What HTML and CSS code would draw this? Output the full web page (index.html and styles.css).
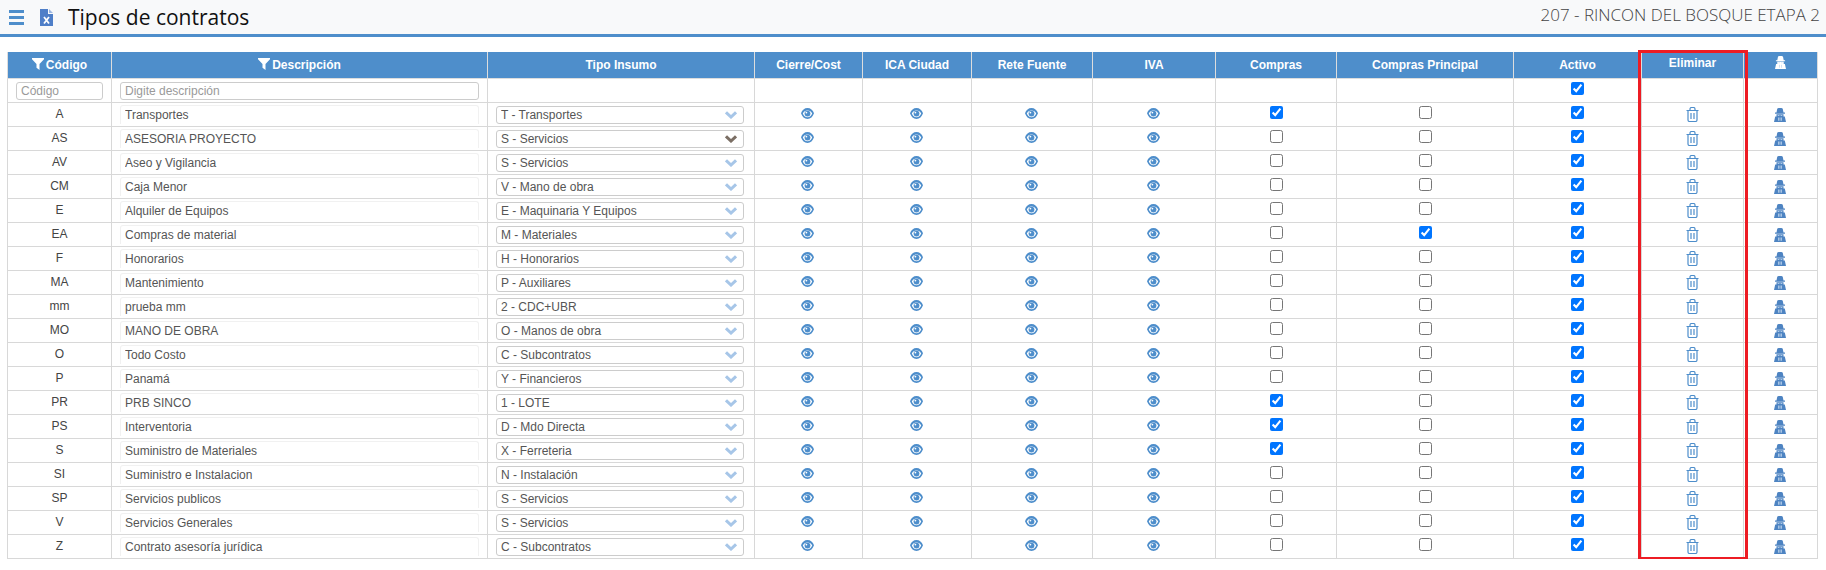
FILE: index.html
```html
<!DOCTYPE html>
<html lang="es">
<head>
<meta charset="utf-8">
<title>Tipos de contratos</title>
<link rel="stylesheet" href="styles.css">
</head>
<body>
<svg class="defs" width="0" height="0" aria-hidden="true">
  <symbol id="i-eye" viewBox="0 0 13 11"><path fill-rule="evenodd" d="M6.500 0C3.500 0 1.100 2 0 5.300 1.100 8.800 3.500 11 6.500 11S11.900 8.800 13 5.300C11.900 2 9.500 0 6.500 0ZM6.500 2.500C8.700 2.500 10.300 3.700 11.200 5.400 10.300 7.500 8.700 9.300 6.500 9.300S2.700 7.500 1.800 5.400C2.700 3.700 4.300 2.500 6.500 2.500Z"/><circle cx="6.500" cy="5.600" r="2.900"/><circle cx="5.400" cy="4.600" r="0.900" fill="#fff"/></symbol>
  <symbol id="i-trash" viewBox="0 0 13 15"><path fill="none" stroke="currentColor" stroke-width="1.200" d="M.5 3.500H12.500M2 3.500V13A1.500 1.500 0 0 0 3.500 14.500H9.500A1.500 1.500 0 0 0 11 13V3.500M4 3.500V2A1.500 1.500 0 0 1 5.500.5H7.500A1.500 1.500 0 0 1 9 2V3.500M5 6V12M8 6V12"/></symbol>
  <symbol id="i-spy" viewBox="0 0 12 14"><path d="M2.500 4.500 3.200 1C3.400.3 4 0 6 0S8.600.3 8.800 1L9.500 4.500H11V5.700H1V4.500ZM2.500 6.300H9.500V8.500H10.800L12 14H0L1.200 8.500H2.500Z"/><path fill="#cfe0f2" d="M4.300 9.500H5.400V12.800H4.300ZM6.600 9.500H7.700V12.800H6.600ZM3.700 7H5.400V7.800H3.700ZM6.600 7H8.300V7.800H6.600Z"/></symbol>
  <symbol id="i-filter" viewBox="0 0 12 12"><path d="M0 0H12V1.200L7.500 6V12L4.500 9.800V6L0 1.200Z"/></symbol>
  <symbol id="i-chev" viewBox="0 0 12 8"><path fill="none" stroke="currentColor" stroke-width="3" d="M1 1.300 6 6 11 1.300"/></symbol>
</svg>

<header class="topbar">
  <div class="topbar-left">
    <svg class="burger" width="15" height="15" viewBox="0 0 15 15" aria-hidden="true"><path d="M0 0H15V3H0ZM0 6H15V9H0ZM0 12H15V15H0Z"/></svg>
    <svg class="xls" width="13" height="17" viewBox="0 0 13 17" aria-hidden="true"><path fill="#4f7fc8" d="M0 0H8V5H13V17H0Z"/><path fill="#9db8e2" d="M9 0 13 4H9Z"/><path fill="none" stroke="#fff" stroke-width="1.800" d="M4 8 9 14.500M9 8 4 14.500"/></svg>
    <h1 class="title">Tipos de contratos</h1>
  </div>
  <div class="project">207 - RINCON DEL BOSQUE ETAPA 2</div>
</header>

<main class="content">
  <table class="grid">
    <colgroup>
      <col class="c-code"><col class="c-desc"><col class="c-type"><col class="c-close"><col class="c-ica"><col class="c-rete"><col class="c-iva"><col class="c-buy"><col class="c-main"><col class="c-act"><col class="c-del"><col class="c-spy">
    </colgroup>
    <thead>
      <tr>
        <th><svg class="ic-filter"><use href="#i-filter"/></svg>Código</th>
        <th><svg class="ic-filter"><use href="#i-filter"/></svg>Descripción</th>
        <th>Tipo Insumo</th><th>Cierre/Cost</th><th>ICA Ciudad</th><th>Rete Fuente</th><th>IVA</th><th>Compras</th><th>Compras Principal</th><th>Activo</th>
        <th class="th-up">Eliminar</th>
        <th class="th-up"><svg class="ic-spy-h"><use href="#i-spy"/></svg></th>
      </tr>
      <tr class="filters">
        <td><input class="field" placeholder="Código"></td>
        <td><input class="field" placeholder="Digite descripción"></td>
        <td></td><td></td><td></td><td></td><td></td><td></td><td></td>
        <td><input type="checkbox" checked></td>
        <td></td><td></td>
      </tr>
    </thead>
    <tbody>
      <tr><td class="code">A</td><td><input class="desc" value="Transportes"></td><td><div class="pick"><select><option>T - Transportes</option></select><svg class="chev"><use href="#i-chev"/></svg></div></td><td><svg class="eye"><use href="#i-eye"/></svg></td><td><svg class="eye"><use href="#i-eye"/></svg></td><td><svg class="eye"><use href="#i-eye"/></svg></td><td><svg class="eye"><use href="#i-eye"/></svg></td><td><input type="checkbox" checked></td><td><input type="checkbox"></td><td><input type="checkbox" checked></td><td><svg class="trash"><use href="#i-trash"/></svg></td><td><svg class="spy"><use href="#i-spy"/></svg></td></tr>
      <tr><td class="code">AS</td><td><input class="desc" value="ASESORIA PROYECTO"></td><td><div class="pick"><select><option>S - Servicios</option></select><svg class="chev chev-dark"><use href="#i-chev"/></svg></div></td><td><svg class="eye"><use href="#i-eye"/></svg></td><td><svg class="eye"><use href="#i-eye"/></svg></td><td><svg class="eye"><use href="#i-eye"/></svg></td><td><svg class="eye"><use href="#i-eye"/></svg></td><td><input type="checkbox"></td><td><input type="checkbox"></td><td><input type="checkbox" checked></td><td><svg class="trash"><use href="#i-trash"/></svg></td><td><svg class="spy"><use href="#i-spy"/></svg></td></tr>
      <tr><td class="code">AV</td><td><input class="desc" value="Aseo y Vigilancia"></td><td><div class="pick"><select><option>S - Servicios</option></select><svg class="chev"><use href="#i-chev"/></svg></div></td><td><svg class="eye"><use href="#i-eye"/></svg></td><td><svg class="eye"><use href="#i-eye"/></svg></td><td><svg class="eye"><use href="#i-eye"/></svg></td><td><svg class="eye"><use href="#i-eye"/></svg></td><td><input type="checkbox"></td><td><input type="checkbox"></td><td><input type="checkbox" checked></td><td><svg class="trash"><use href="#i-trash"/></svg></td><td><svg class="spy"><use href="#i-spy"/></svg></td></tr>
      <tr><td class="code">CM</td><td><input class="desc" value="Caja Menor"></td><td><div class="pick"><select><option>V - Mano de obra</option></select><svg class="chev"><use href="#i-chev"/></svg></div></td><td><svg class="eye"><use href="#i-eye"/></svg></td><td><svg class="eye"><use href="#i-eye"/></svg></td><td><svg class="eye"><use href="#i-eye"/></svg></td><td><svg class="eye"><use href="#i-eye"/></svg></td><td><input type="checkbox"></td><td><input type="checkbox"></td><td><input type="checkbox" checked></td><td><svg class="trash"><use href="#i-trash"/></svg></td><td><svg class="spy"><use href="#i-spy"/></svg></td></tr>
      <tr><td class="code">E</td><td><input class="desc" value="Alquiler de Equipos"></td><td><div class="pick"><select><option>E - Maquinaria Y Equipos</option></select><svg class="chev"><use href="#i-chev"/></svg></div></td><td><svg class="eye"><use href="#i-eye"/></svg></td><td><svg class="eye"><use href="#i-eye"/></svg></td><td><svg class="eye"><use href="#i-eye"/></svg></td><td><svg class="eye"><use href="#i-eye"/></svg></td><td><input type="checkbox"></td><td><input type="checkbox"></td><td><input type="checkbox" checked></td><td><svg class="trash"><use href="#i-trash"/></svg></td><td><svg class="spy"><use href="#i-spy"/></svg></td></tr>
      <tr><td class="code">EA</td><td><input class="desc" value="Compras de material"></td><td><div class="pick"><select><option>M - Materiales</option></select><svg class="chev"><use href="#i-chev"/></svg></div></td><td><svg class="eye"><use href="#i-eye"/></svg></td><td><svg class="eye"><use href="#i-eye"/></svg></td><td><svg class="eye"><use href="#i-eye"/></svg></td><td><svg class="eye"><use href="#i-eye"/></svg></td><td><input type="checkbox"></td><td><input type="checkbox" checked></td><td><input type="checkbox" checked></td><td><svg class="trash"><use href="#i-trash"/></svg></td><td><svg class="spy"><use href="#i-spy"/></svg></td></tr>
      <tr><td class="code">F</td><td><input class="desc" value="Honorarios"></td><td><div class="pick"><select><option>H - Honorarios</option></select><svg class="chev"><use href="#i-chev"/></svg></div></td><td><svg class="eye"><use href="#i-eye"/></svg></td><td><svg class="eye"><use href="#i-eye"/></svg></td><td><svg class="eye"><use href="#i-eye"/></svg></td><td><svg class="eye"><use href="#i-eye"/></svg></td><td><input type="checkbox"></td><td><input type="checkbox"></td><td><input type="checkbox" checked></td><td><svg class="trash"><use href="#i-trash"/></svg></td><td><svg class="spy"><use href="#i-spy"/></svg></td></tr>
      <tr><td class="code">MA</td><td><input class="desc" value="Mantenimiento"></td><td><div class="pick"><select><option>P - Auxiliares</option></select><svg class="chev"><use href="#i-chev"/></svg></div></td><td><svg class="eye"><use href="#i-eye"/></svg></td><td><svg class="eye"><use href="#i-eye"/></svg></td><td><svg class="eye"><use href="#i-eye"/></svg></td><td><svg class="eye"><use href="#i-eye"/></svg></td><td><input type="checkbox"></td><td><input type="checkbox"></td><td><input type="checkbox" checked></td><td><svg class="trash"><use href="#i-trash"/></svg></td><td><svg class="spy"><use href="#i-spy"/></svg></td></tr>
      <tr><td class="code">mm</td><td><input class="desc" value="prueba mm"></td><td><div class="pick"><select><option>2 - CDC+UBR</option></select><svg class="chev"><use href="#i-chev"/></svg></div></td><td><svg class="eye"><use href="#i-eye"/></svg></td><td><svg class="eye"><use href="#i-eye"/></svg></td><td><svg class="eye"><use href="#i-eye"/></svg></td><td><svg class="eye"><use href="#i-eye"/></svg></td><td><input type="checkbox"></td><td><input type="checkbox"></td><td><input type="checkbox" checked></td><td><svg class="trash"><use href="#i-trash"/></svg></td><td><svg class="spy"><use href="#i-spy"/></svg></td></tr>
      <tr><td class="code">MO</td><td><input class="desc" value="MANO DE OBRA"></td><td><div class="pick"><select><option>O - Manos de obra</option></select><svg class="chev"><use href="#i-chev"/></svg></div></td><td><svg class="eye"><use href="#i-eye"/></svg></td><td><svg class="eye"><use href="#i-eye"/></svg></td><td><svg class="eye"><use href="#i-eye"/></svg></td><td><svg class="eye"><use href="#i-eye"/></svg></td><td><input type="checkbox"></td><td><input type="checkbox"></td><td><input type="checkbox" checked></td><td><svg class="trash"><use href="#i-trash"/></svg></td><td><svg class="spy"><use href="#i-spy"/></svg></td></tr>
      <tr><td class="code">O</td><td><input class="desc" value="Todo Costo"></td><td><div class="pick"><select><option>C - Subcontratos</option></select><svg class="chev"><use href="#i-chev"/></svg></div></td><td><svg class="eye"><use href="#i-eye"/></svg></td><td><svg class="eye"><use href="#i-eye"/></svg></td><td><svg class="eye"><use href="#i-eye"/></svg></td><td><svg class="eye"><use href="#i-eye"/></svg></td><td><input type="checkbox"></td><td><input type="checkbox"></td><td><input type="checkbox" checked></td><td><svg class="trash"><use href="#i-trash"/></svg></td><td><svg class="spy"><use href="#i-spy"/></svg></td></tr>
      <tr><td class="code">P</td><td><input class="desc" value="Panamá"></td><td><div class="pick"><select><option>Y - Financieros</option></select><svg class="chev"><use href="#i-chev"/></svg></div></td><td><svg class="eye"><use href="#i-eye"/></svg></td><td><svg class="eye"><use href="#i-eye"/></svg></td><td><svg class="eye"><use href="#i-eye"/></svg></td><td><svg class="eye"><use href="#i-eye"/></svg></td><td><input type="checkbox"></td><td><input type="checkbox"></td><td><input type="checkbox" checked></td><td><svg class="trash"><use href="#i-trash"/></svg></td><td><svg class="spy"><use href="#i-spy"/></svg></td></tr>
      <tr><td class="code">PR</td><td><input class="desc" value="PRB SINCO"></td><td><div class="pick"><select><option>1 - LOTE</option></select><svg class="chev"><use href="#i-chev"/></svg></div></td><td><svg class="eye"><use href="#i-eye"/></svg></td><td><svg class="eye"><use href="#i-eye"/></svg></td><td><svg class="eye"><use href="#i-eye"/></svg></td><td><svg class="eye"><use href="#i-eye"/></svg></td><td><input type="checkbox" checked></td><td><input type="checkbox"></td><td><input type="checkbox" checked></td><td><svg class="trash"><use href="#i-trash"/></svg></td><td><svg class="spy"><use href="#i-spy"/></svg></td></tr>
      <tr><td class="code">PS</td><td><input class="desc" value="Interventoria"></td><td><div class="pick"><select><option>D - Mdo Directa</option></select><svg class="chev"><use href="#i-chev"/></svg></div></td><td><svg class="eye"><use href="#i-eye"/></svg></td><td><svg class="eye"><use href="#i-eye"/></svg></td><td><svg class="eye"><use href="#i-eye"/></svg></td><td><svg class="eye"><use href="#i-eye"/></svg></td><td><input type="checkbox" checked></td><td><input type="checkbox"></td><td><input type="checkbox" checked></td><td><svg class="trash"><use href="#i-trash"/></svg></td><td><svg class="spy"><use href="#i-spy"/></svg></td></tr>
      <tr><td class="code">S</td><td><input class="desc" value="Suministro de Materiales"></td><td><div class="pick"><select><option>X - Ferreteria</option></select><svg class="chev"><use href="#i-chev"/></svg></div></td><td><svg class="eye"><use href="#i-eye"/></svg></td><td><svg class="eye"><use href="#i-eye"/></svg></td><td><svg class="eye"><use href="#i-eye"/></svg></td><td><svg class="eye"><use href="#i-eye"/></svg></td><td><input type="checkbox" checked></td><td><input type="checkbox"></td><td><input type="checkbox" checked></td><td><svg class="trash"><use href="#i-trash"/></svg></td><td><svg class="spy"><use href="#i-spy"/></svg></td></tr>
      <tr><td class="code">SI</td><td><input class="desc" value="Suministro e Instalacion"></td><td><div class="pick"><select><option>N - Instalación</option></select><svg class="chev"><use href="#i-chev"/></svg></div></td><td><svg class="eye"><use href="#i-eye"/></svg></td><td><svg class="eye"><use href="#i-eye"/></svg></td><td><svg class="eye"><use href="#i-eye"/></svg></td><td><svg class="eye"><use href="#i-eye"/></svg></td><td><input type="checkbox"></td><td><input type="checkbox"></td><td><input type="checkbox" checked></td><td><svg class="trash"><use href="#i-trash"/></svg></td><td><svg class="spy"><use href="#i-spy"/></svg></td></tr>
      <tr><td class="code">SP</td><td><input class="desc" value="Servicios publicos"></td><td><div class="pick"><select><option>S - Servicios</option></select><svg class="chev"><use href="#i-chev"/></svg></div></td><td><svg class="eye"><use href="#i-eye"/></svg></td><td><svg class="eye"><use href="#i-eye"/></svg></td><td><svg class="eye"><use href="#i-eye"/></svg></td><td><svg class="eye"><use href="#i-eye"/></svg></td><td><input type="checkbox"></td><td><input type="checkbox"></td><td><input type="checkbox" checked></td><td><svg class="trash"><use href="#i-trash"/></svg></td><td><svg class="spy"><use href="#i-spy"/></svg></td></tr>
      <tr><td class="code">V</td><td><input class="desc" value="Servicios Generales"></td><td><div class="pick"><select><option>S - Servicios</option></select><svg class="chev"><use href="#i-chev"/></svg></div></td><td><svg class="eye"><use href="#i-eye"/></svg></td><td><svg class="eye"><use href="#i-eye"/></svg></td><td><svg class="eye"><use href="#i-eye"/></svg></td><td><svg class="eye"><use href="#i-eye"/></svg></td><td><input type="checkbox"></td><td><input type="checkbox"></td><td><input type="checkbox" checked></td><td><svg class="trash"><use href="#i-trash"/></svg></td><td><svg class="spy"><use href="#i-spy"/></svg></td></tr>
      <tr><td class="code">Z</td><td><input class="desc" value="Contrato asesoría jurídica"></td><td><div class="pick"><select><option>C - Subcontratos</option></select><svg class="chev"><use href="#i-chev"/></svg></div></td><td><svg class="eye"><use href="#i-eye"/></svg></td><td><svg class="eye"><use href="#i-eye"/></svg></td><td><svg class="eye"><use href="#i-eye"/></svg></td><td><svg class="eye"><use href="#i-eye"/></svg></td><td><input type="checkbox"></td><td><input type="checkbox"></td><td><input type="checkbox" checked></td><td><svg class="trash"><use href="#i-trash"/></svg></td><td><svg class="spy"><use href="#i-spy"/></svg></td></tr>
    </tbody>
  </table>
  <div class="highlight" aria-hidden="true"></div>
</main>
</body>
</html>
```

FILE: styles.css
```css
* { box-sizing: border-box; }

html, body { margin: 0; padding: 0; background: #fff; }

body {
  font-family: "Liberation Sans", Arial, sans-serif;
  font-size: 12px;
  color: #555;
  overflow: hidden;
}

.defs { position: absolute; }

.topbar {
  height: 37px;
  background: #f8f9fa;
  border-bottom: 3px solid #4e8ecb;
  display: flex;
  align-items: center;
  justify-content: space-between;
  padding: 0 6px 0 9px;
}

.topbar-left { display: flex; align-items: center; }

.burger { fill: #4e8ecb; margin-right: 16px; }
.xls { margin-right: 15px; }

.title {
  margin: 0;
  font-family: "Open Sans", sans-serif;
  font-size: 21px;
  font-weight: 400;
  line-height: 34px;
  color: #111;
}

.project {
  font-family: "Open Sans", sans-serif;
  font-size: 17px;
  font-weight: 300;
  line-height: 28px;
  color: #444;
  margin-bottom: 5px;
}

.content {
  position: relative;
  padding: 15px 0 0 7px;
}

.grid {
  width: 1810px;
  table-layout: fixed;
  border-collapse: collapse;
}

.c-code { width: 104px; }
.c-desc { width: 376px; }
.c-type { width: 267px; }
.c-close { width: 108px; }
.c-ica { width: 109px; }
.c-rete { width: 121px; }
.c-iva { width: 123px; }
.c-buy { width: 121px; }
.c-main { width: 177px; }
.c-act { width: 128px; }
.c-del { width: 102px; }
.c-spy { width: 74px; }

.grid th {
  height: 26px;
  padding: 0;
  background: #4e8ecb;
  border: 1px solid #ddd;
  border-top: 0;
  color: #fff;
  font-size: 12px;
  font-weight: 700;
  text-align: center;
  vertical-align: middle;
}

.grid th.th-up { vertical-align: top; padding-top: 4px; }

.grid td {
  height: 24px;
  padding: 0;
  border: 1px solid #d8d8d8;
  text-align: center;
  vertical-align: middle;
  line-height: 0;
}

.grid td.code {
  font-size: 12px;
  line-height: 14px;
  color: #444;
  padding-bottom: 1px;
}

.ic-filter {
  width: 12px;
  height: 12px;
  fill: #fff;
  margin-right: 2px;
  vertical-align: -1px;
}

.ic-spy-h { width: 11px; height: 13px; fill: #fff; vertical-align: top; }

.field, .desc, select {
  font-family: "Liberation Sans", Arial, sans-serif;
  font-size: 12px;
  color: #555;
  outline: 0;
}

.field {
  display: block;
  height: 18px;
  width: calc(100% - 16px);
  margin: 2px 8px 0;
  padding: 0 4px;
  border: 1px solid #ccc;
  border-radius: 3px;
  background: #fff;
}

.filters td:first-child .field { width: 87px; }

.field::placeholder { color: #9a9a9a; opacity: 1; }

.desc {
  display: block;
  height: 19px;
  width: calc(100% - 16px);
  margin: 0 8px;
  padding: 0 4px;
  border: 1px solid #f1f1f1;
  border-bottom: 0;
  border-radius: 3px 3px 0 0;
  background: #fff;
}

.pick {
  position: relative;
  height: 18px;
  margin: 2px 10px 0 8px;
}

.pick select {
  display: block;
  width: 100%;
  height: 18px;
  padding: 0 4px;
  appearance: none;
  border: 1px solid #ccc;
  border-radius: 3px;
  background: #fff;
}

.chev {
  position: absolute;
  right: 7px;
  top: 5px;
  width: 12px;
  height: 8px;
  color: #a7c6e8;
}

.chev-dark { color: #7b6f65; }

.eye {
  display: inline-block;
  width: 13px;
  height: 11px;
  fill: #4e8ecb;
  margin: 0 2px 2px 0;
}

.trash {
  display: inline-block;
  width: 13px;
  height: 15px;
  color: #4e8ecb;
}

.spy {
  display: inline-block;
  width: 12px;
  height: 14px;
  fill: #4e84c2;
  margin: 2px 1px 0 0;
}

input[type="checkbox"] {
  width: 13px;
  height: 13px;
  margin: 0 0 4px;
  vertical-align: middle;
  accent-color: #0075ff;
}

.highlight {
  position: absolute;
  left: 1638px;
  top: 13px;
  width: 110px;
  height: 510px;
  border: 3px solid #ed1c24;
  pointer-events: none;
}
```
